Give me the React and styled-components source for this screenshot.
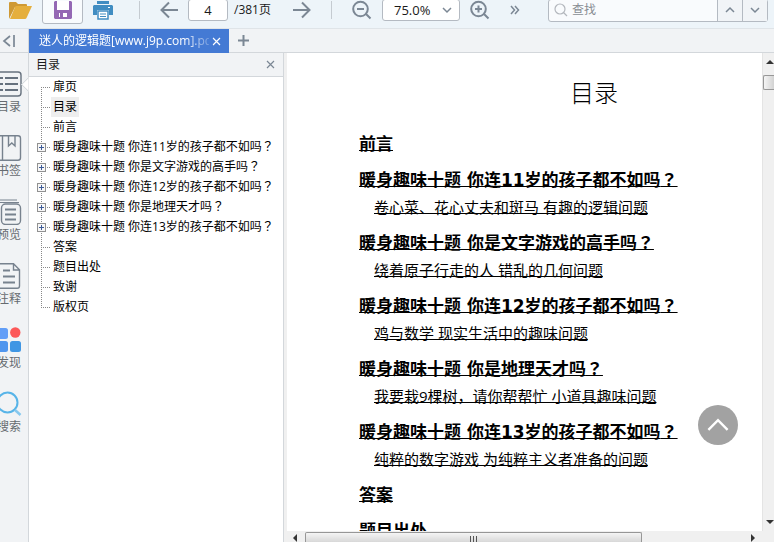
import React, { useState } from 'react'
import styled, { createGlobalStyle, css, ThemeProvider } from 'styled-components'

const theme = {
  color: {
    text: '#1a1a1a',
    muted: '#666b70',
    icon: '#7b8794',
    toolbar: '#edf4f9',
    panel: '#f1f3f5',
    border: '#d3d7db',
    control: '#b4bac2',
    tab: '#447ad4',
  },
  font: {
    base: '"Open Sans", "Noto Sans CJK SC", sans-serif',
    heading: '"DejaVu Sans", "Noto Sans CJK SC", sans-serif',
    mark: '"Noto Sans CJK TC", sans-serif',
  },
}

const outline = [
  { title: '扉页' },
  { title: '目录' },
  { title: '前言' },
  { title: '暖身趣味十题 你连11岁的孩子都不如吗？', nested: true },
  { title: '暖身趣味十题 你是文字游戏的高手吗？', nested: true },
  { title: '暖身趣味十题 你连12岁的孩子都不如吗？', nested: true },
  { title: '暖身趣味十题 你是地理天才吗？', nested: true },
  { title: '暖身趣味十题 你连13岁的孩子都不如吗？', nested: true },
  { title: '答案' },
  { title: '题目出处' },
  { title: '致谢' },
  { title: '版权页' },
]

const chapters = [
  { title: '前言' },
  { title: '暖身趣味十题 你连11岁的孩子都不如吗？', sub: '卷心菜、花心丈夫和斑马 有趣的逻辑问题' },
  { title: '暖身趣味十题 你是文字游戏的高手吗？', sub: '绕着原子行走的人 错乱的几何问题' },
  { title: '暖身趣味十题 你连12岁的孩子都不如吗？', sub: '鸡与数学 现实生活中的趣味问题' },
  { title: '暖身趣味十题 你是地理天才吗？', sub: '我要栽9棵树，请你帮帮忙 小道具趣味问题' },
  { title: '暖身趣味十题 你连13岁的孩子都不如吗？', sub: '纯粹的数字游戏 为纯粹主义者准备的问题' },
  { title: '答案' },
  { title: '题目出处' },
]

const Arrow = ({ flip }) => (
  <svg width="18" height="18" viewBox="0 0 18 18" fill="none" stroke="currentColor" strokeWidth="2">
    <path d={flip ? 'M0 9h16M9 1.500l7.500 7.500-7.500 7.500' : 'M18 9H2M9 1.500L1.500 9 9 16.500'} />
  </svg>
)

const Lens = ({ plus }) => (
  <svg width="20" height="20" viewBox="0 0 20 20" fill="none" stroke="currentColor" strokeWidth="2">
    <circle cx="8.500" cy="9" r="7.300" />
    <path d="M5 9h7M14 14l4.500 4.500" />
    {plus && <path d="M8.500 5.500v7" />}
  </svg>
)

const Chevron = ({ up, size = 10, width = 1.5 }) => (
  <svg width={size} height={size} viewBox="0 0 10 10" fill="none" stroke="currentColor" strokeWidth={width}>
    <path d={up ? 'M1 7l4-4 4 4' : 'M1 3l4 4 4-4'} />
  </svg>
)

const Cross = ({ size = 9 }) => (
  <svg width={size} height={size} viewBox="0 0 9 9" stroke="currentColor" strokeWidth="1.200">
    <path d="M1 1l7 7M8 1L1 8" />
  </svg>
)

const Triangle = ({ d }) => (
  <svg width="8" height="8" viewBox="0 0 8 8" fill="#333">
    <path d={d} />
  </svg>
)

const FolderIcon = () => (
  <svg width="23" height="20" viewBox="0 0 23 20">
    <path d="M0 19V3q0-1 1-1h6l2 2h8q1 0 1 1v2H6z" fill="#cf9a35" />
    <path d="M1 19L6 7q.5-1 1.500-1H23l-5.500 12q-.5 1-1.500 1z" fill="#e5af3d" />
  </svg>
)

const SaveIcon = () => (
  <svg width="18" height="18" viewBox="0 0 18 18">
    <path d="M1 0h16l1 1v16l-1 1H1l-1-1V1z" fill="#9468b4" />
    <path d="M3 0h12v9H3zM5 12h8v4H5z" fill="#fff" />
    <path d="M6 12h3v4H6z" fill="#9468b4" />
  </svg>
)

const PrintIcon = () => (
  <svg width="20" height="19" viewBox="0 0 20 19">
    <path d="M4 0h12v3H4zM1 4h18l1 1v9h-4V9H4v5H0V5z" fill="#418dc2" />
    <path d="M5 10h10v8H5z" fill="#fff" stroke="#418dc2" strokeWidth="1.500" />
    <path d="M7 13h6M7 15.500h6" stroke="#418dc2" strokeWidth="1.200" />
    <path d="M15 6h2v1h-2z" fill="#fff" />
  </svg>
)

const Line26 = ({ children }) => (
  <svg width="26" height="26" viewBox="0 0 26 26" fill="none" stroke="#77828e" strokeWidth="1.400">
    {children}
  </svg>
)

// the full-width question mark sits in the middle of its square
const Title = ({ text }) => (
  text.endsWith('？') ? <>{text.slice(0, -1)}<Mark>？</Mark></> : text
)

const tools = [
  {
    label: '目录',
    icon: (
      <Line26>
        <rect x="-2" y="1" width="27" height="24" rx="3" stroke="#66717e" />
        <path d="M3 7h4M9 7h13M3 13h4M9 13h13M3 19h4M9 19h13" stroke="#66717e" strokeWidth="2" />
      </Line26>
    ),
  },
  {
    label: '书签',
    icon: (
      <Line26>
        <rect x="-2" y="0.700" width="26.500" height="24.500" rx="2.500" />
        <path d="M6.500 1v24M12.500 1v10l3.300-3 3.200 3V1" />
      </Line26>
    ),
  },
  {
    label: '预览',
    icon: (
      <Line26>
        <path d="M2 1h19M3 3.500h20" strokeWidth="1" />
        <rect x="5.500" y="5" width="19" height="20.500" rx="4" />
        <path d="M9 10.500h11M9 15.500h11M9 20.500h11" strokeWidth="2" />
      </Line26>
    ),
  },
  {
    label: '注释',
    icon: (
      <Line26>
        <path d="M0 .7h17.500l6 6V23q0 2.300-2.300 2.300H0M17.500 1v6h6" />
        <path d="M7 7.500h7M7 13.500h12M7 19.500h12" strokeWidth="2" />
      </Line26>
    ),
  },
  {
    label: '发现',
    icon: (
      <svg width="26" height="26" viewBox="0 0 26 26">
        <rect x="1" y="1" width="11" height="11" rx="2.500" fill="#629ef7" />
        <circle cx="19.300" cy="5.500" r="5.200" fill="#fc5858" />
        <rect x="1" y="14" width="11" height="11" rx="2.500" fill="#5096ee" />
        <rect x="14" y="14" width="11" height="11" rx="2.500" fill="#3f96e4" />
      </svg>
    ),
  },
  {
    label: '搜索',
    icon: (
      <svg width="26" height="26" viewBox="0 0 26 26" fill="none" stroke="#57b4e8" strokeWidth="2">
        <circle cx="11.500" cy="11.500" r="10" />
        <path d="M19 19l5.500 5" stroke="#86c8ee" strokeWidth="2.500" />
      </svg>
    ),
  },
]

const App = () => {
  const [active, setActive] = useState('目录')
  const [selected, setSelected] = useState('目录')
  const [page, setPage] = useState('4')
  const [zoom, setZoom] = useState('75.0%')

  return (
    <ThemeProvider theme={theme}>
      <GlobalStyle />
      <Window>
        <Toolbar>
          <Toolbar.Group $end="6px">
            <IconButton aria-label="打开"><FolderIcon /></IconButton>
            <IconButton aria-label="保存" $framed><SaveIcon /></IconButton>
            <IconButton aria-label="打印"><PrintIcon /></IconButton>
          </Toolbar.Group>
          <Divider />
          <Toolbar.Group $end="2px">
            <IconButton aria-label="上一页"><Arrow /></IconButton>
            <Pager>
              <Pager.Input aria-label="页码" value={page} onChange={e => setPage(e.target.value)} />
              /381页
            </Pager>
          </Toolbar.Group>
          <IconButton aria-label="下一页"><Arrow flip /></IconButton>
          <Divider />
          <Toolbar.Group>
            <IconButton aria-label="缩小"><Lens /></IconButton>
            <Zoom>
              <Zoom.Select aria-label="缩放" value={zoom} onChange={e => setZoom(e.target.value)}>
                <option>50.0%</option>
                <option>75.0%</option>
                <option>100.0%</option>
              </Zoom.Select>
              <Chevron />
            </Zoom>
            <IconButton aria-label="放大"><Lens plus /></IconButton>
          </Toolbar.Group>
          <IconButton aria-label="更多">
            <svg width="10" height="10" viewBox="0 0 10 10" fill="none" stroke="currentColor" strokeWidth="1.500">
              <path d="M1 1l3.500 4L1 9M5 1l3.500 4L5 9" />
            </svg>
          </IconButton>
          <Search>
            <svg width="14" height="14" viewBox="0 0 14 14" fill="none" stroke="#b3b7bd" strokeWidth="1.200">
              <circle cx="6" cy="6" r="5" />
              <path d="M9.500 9.500L13 13" />
            </svg>
            <Search.Input aria-label="查找" placeholder="查找" />
            <Search.Button aria-label="查找上一个"><Chevron up /></Search.Button>
            <Search.Button aria-label="查找下一个"><Chevron /></Search.Button>
          </Search>
        </Toolbar>

        <TabBar>
          <TabBar.Collapse aria-label="收起">
            <svg width="13" height="12" viewBox="0 0 13 12" fill="none" stroke="currentColor" strokeWidth="1.700">
              <path d="M8 1L2 6l6 5M12 0v12" />
            </svg>
          </TabBar.Collapse>
          <Tab>
            <Tab.Name>迷人的逻辑题[www.j9p.com].pdf</Tab.Name>
            <IconButton aria-label="关闭标签" $light><Cross /></IconButton>
          </Tab>
          <TabBar.Add aria-label="新标签">
            <svg width="11" height="11" viewBox="0 0 11 11" stroke="currentColor" strokeWidth="2">
              <path d="M5.500 0v11M0 5.500h11" />
            </svg>
          </TabBar.Add>
        </TabBar>

        <Body>
          <Sidebar>
            {tools.map(({ label, icon }) => (
              <Sidebar.Item key={label} $active={active === label} onClick={() => setActive(label)}>
                {icon}
                <span>{label}</span>
              </Sidebar.Item>
            ))}
          </Sidebar>

          <Panel>
            <Panel.Header>
              目录
              <IconButton aria-label="关闭目录"><Cross /></IconButton>
            </Panel.Header>
            <Tree>
              {outline.map(({ title, nested }, i) => (
                <Tree.Row key={title}>
                  <Branch $first={i === 0} $last={i === outline.length - 1}>
                    {nested && <Branch.Toggle aria-label="展开" />}
                  </Branch>
                  <Tree.Label $selected={selected === title} onClick={() => setSelected(title)}>
                    <Title text={title} />
                  </Tree.Label>
                </Tree.Row>
              ))}
            </Tree>
          </Panel>

          <Viewer>
            <Viewport>
              <Sheet>
                <Sheet.Title>目录</Sheet.Title>
                {chapters.map(({ title, sub }) => (
                  <Chapter key={title}>
                    <Chapter.Title><a href="#chapter"><Title text={title} /></a></Chapter.Title>
                    {sub && <Chapter.Sub><a href="#section">{sub}</a></Chapter.Sub>}
                  </Chapter>
                ))}
              </Sheet>
              <ToTop aria-label="回到顶部"><Chevron up size={24} width={1} /></ToTop>
            </Viewport>
            <ScrollY>
              <ScrollY.Start>
                <Triangle d="M4 2l4 4H0z" />
                <ScrollY.Thumb />
              </ScrollY.Start>
              <Triangle d="M0 2h8L4 6z" />
            </ScrollY>
            <ScrollX>
              <Triangle d="M6 0v8L2 4z" />
              <ScrollX.Track>
                <ScrollX.Thumb>
                  <svg width="8" height="6" viewBox="0 0 8 6" stroke="#555">
                    <path d="M.5 0v6M3.500 0v6M6.500 0v6" />
                  </svg>
                </ScrollX.Thumb>
              </ScrollX.Track>
              <Triangle d="M2 0l4 4-4 4z" />
            </ScrollX>
            <Corner />
          </Viewer>
        </Body>
      </Window>
    </ThemeProvider>
  )
}

const GlobalStyle = createGlobalStyle`
  * {
    box-sizing: border-box;
  }
  body {
    margin: 0;
    overflow: hidden;
    color: ${props => props.theme.color.text};
    font: 12px/18px ${props => props.theme.font.base};
  }
  button, input, select {
    margin: 0;
    padding: 0;
    border: 0;
    background: none;
    color: inherit;
    font: inherit;
  }
  svg {
    display: block;
    flex: none;
  }
`

const Window = styled.div`
  display: flex;
  flex-direction: column;
  height: 100vh;
  background: #fff;
`

const Mark = styled.span`
  font-family: ${props => props.theme.font.mark};
  line-height: 1;
`

const Toolbar = styled.header`
  display: flex;
  flex: none;
  align-items: center;
  gap: 20px;
  height: 29px;
  padding: 0 6px 8px 9px;
  border-bottom: 1px solid #dfe4e8;
  background: ${props => props.theme.color.toolbar};
`

Toolbar.Group = styled.div`
  display: flex;
  align-items: center;
  gap: 10px;
  padding-right: ${props => props.$end || 0};
`

const IconButton = styled.button`
  display: flex;
  flex: none;
  align-items: center;
  justify-content: center;
  color: ${props => (props.$light ? '#fff' : props.theme.color.icon)};
  ${props => props.$framed && css`
    width: 41px;
    height: 28px;
    border: 1px solid ${props.theme.color.control};
    border-radius: 3px;
    background: #f8fbfd;
  `}
`

const Divider = styled.div`
  flex: none;
  width: 1px;
  height: 18px;
  background: #c5cbd1;
`

const Pager = styled.label`
  display: flex;
  align-items: center;
  gap: 6px;
  white-space: nowrap;
`

Pager.Input = styled.input`
  width: 40px;
  height: 22px;
  border: 1px solid ${props => props.theme.color.control};
  border-radius: 3px;
  background: #fff;
  font-size: 13px;
  text-align: center;
`

const Zoom = styled.div`
  display: flex;
  align-items: center;
  width: 78px;
  height: 22px;
  padding-right: 7px;
  border: 1px solid ${props => props.theme.color.control};
  border-radius: 3px;
  background: #fff;
  color: ${props => props.theme.color.icon};
`

Zoom.Select = styled.select`
  flex: 1;
  min-width: 0;
  padding-left: 11px;
  appearance: none;
  color: ${props => props.theme.color.text};
  font-size: 13px;
`

const Search = styled.div`
  display: flex;
  flex: 1;
  align-items: center;
  height: 23px;
  min-width: 120px;
  margin-left: 8px;
  padding-left: 5px;
  border: 1px solid ${props => props.theme.color.control};
  border-radius: 3px;
  background: #f9fbfd;
`

Search.Input = styled.input`
  flex: 1;
  min-width: 0;
  padding-left: 4px;
  &::placeholder {
    color: #888d93;
    opacity: 1;
  }
`

Search.Button = styled.button`
  display: flex;
  align-items: center;
  justify-content: center;
  width: 25px;
  height: 100%;
  border-left: 1px solid ${props => props.theme.color.control};
  background: #f1f4f7;
  color: ${props => props.theme.color.icon};
`

const TabBar = styled.div`
  display: flex;
  flex: none;
  height: 24px;
  border-bottom: 1px solid ${props => props.theme.color.border};
  background: ${props => props.theme.color.panel};
`

TabBar.Collapse = styled.button`
  display: flex;
  align-items: center;
  width: 29px;
  padding-left: 2px;
  border-right: 1px solid ${props => props.theme.color.border};
  color: ${props => props.theme.color.icon};
`

TabBar.Add = styled.button`
  display: flex;
  align-items: center;
  padding: 0 9px;
  color: ${props => props.theme.color.icon};
`

const Tab = styled.div`
  display: flex;
  align-items: center;
  gap: 3px;
  width: 200px;
  height: 24px;
  padding: 0 8px 0 10px;
  background: ${props => props.theme.color.tab};
  color: #fff;
`

Tab.Name = styled.span`
  flex: 1;
  overflow: hidden;
  white-space: nowrap;
  mask-image: linear-gradient(90deg, #000 85%, transparent 105%);
`

const Body = styled.main`
  display: flex;
  flex: 1;
  min-height: 0;
`

const Sidebar = styled.nav`
  display: flex;
  flex: none;
  flex-direction: column;
  align-items: flex-end;
  gap: 18px;
  width: 29px;
  padding: 18px 6px 0 0;
  border-right: 1px solid ${props => props.theme.color.border};
  background: ${props => props.theme.color.panel};
`

Sidebar.Item = styled.button`
  position: relative;
  width: 26px;
  color: ${props => props.theme.color.muted};
  line-height: 20px;
  white-space: nowrap;
  span {
    display: block;
  }
  ${props => props.$active && css`
    &:after {
      content: '';
      position: absolute;
      top: 8px;
      right: -12px;
      width: 10px;
      height: 10px;
      border: solid ${props.theme.color.border};
      border-width: 0 0 1px 1px;
      background: #fff;
      transform: rotate(45deg);
      clip-path: polygon(0 0, 100% 100%, 0 100%);
    }
  `}
`

const Panel = styled.section`
  display: flex;
  flex: none;
  flex-direction: column;
  width: 255px;
  border-right: 1px solid ${props => props.theme.color.border};
`

Panel.Header = styled.div`
  display: flex;
  align-items: center;
  justify-content: space-between;
  height: 24px;
  padding: 0 8px 0 7px;
  border-bottom: 1px solid ${props => props.theme.color.border};
  background: ${props => props.theme.color.panel};
`

const Tree = styled.ul`
  margin: 0;
  padding: 0 0 0 8px;
  color: #000;
  list-style: none;
`

Tree.Row = styled.li`
  display: flex;
  height: 20px;
`

Tree.Label = styled.button`
  padding: 0 2px;
  background: ${props => (props.$selected ? '#eee' : 'none')};
  white-space: nowrap;
`

// dotted connector lines: one down the column, one out to the label
const Branch = styled.span`
  display: flex;
  flex: none;
  align-items: center;
  width: 14px;
  background:
    repeating-linear-gradient(#888 0 1px, transparent 1px 2px)
      4px ${props => (props.$first ? '10px' : '0')} / 1px ${props => (props.$last ? '10px' : '100%')} no-repeat,
    repeating-linear-gradient(90deg, #888 0 1px, transparent 1px 2px)
      4px 10px / 9px 1px no-repeat;
`

Branch.Toggle = styled.button`
  width: 9px;
  height: 9px;
  margin-top: 1px;
  border: 1px solid #919191;
  background:
    linear-gradient(#3c5a96, #3c5a96) center / 5px 1px no-repeat,
    linear-gradient(#3c5a96, #3c5a96) center / 1px 5px no-repeat,
    #f7f7f7;
`

const Viewer = styled.section`
  display: grid;
  flex: 1;
  grid-template-rows: 1fr 11px;
  grid-template-columns: 1fr 12px;
  min-width: 0;
  padding-left: 3px;
  background: #f0f0f0;
`

const Viewport = styled.div`
  position: relative;
  min-width: 0;
  min-height: 0;
  overflow: hidden;
  background: #fff;
`

const Sheet = styled.article`
  width: 614px;
  padding: 22px 0 0 72px;
  color: #000;
  a {
    color: inherit;
    text-decoration-thickness: 1px;
    text-decoration-skip-ink: none;
    text-underline-offset: 0;
  }
`

Sheet.Title = styled.h1`
  margin: 0 0 20px -72px;
  font-size: 24px;
  font-weight: 300;
  line-height: 36px;
  text-align: center;
`

const Chapter = styled.section`
  margin-bottom: 9px;
  line-height: 27px;
  white-space: nowrap;
`

Chapter.Title = styled.h2`
  margin: 0;
  font-family: ${props => props.theme.font.heading};
  font-size: 17px;
  font-weight: 700;
  line-height: 27px;
`

Chapter.Sub = styled.p`
  margin: 0;
  padding-left: 15px;
  font-size: 15px;
`

const ToTop = styled.button`
  position: absolute;
  right: 24px;
  bottom: 86px;
  display: flex;
  align-items: center;
  justify-content: center;
  width: 40px;
  height: 40px;
  border-radius: 50%;
  background: #a2a2a2;
  color: #fff;
`

const ScrollY = styled.div`
  display: flex;
  flex-direction: column;
  align-items: flex-end;
  justify-content: space-between;
  padding: 5px 0;
  border-left: 1px solid #e4e4e4;
`

ScrollY.Start = styled.div`
  display: flex;
  flex-direction: column;
  align-items: flex-end;
  gap: 9px;
  width: 100%;
`

ScrollY.Thumb = styled.div`
  width: 100%;
  height: 15px;
  border: 1px solid #979797;
  border-right: 0;
  border-radius: 2px 0 0 2px;
  background: linear-gradient(90deg, #f5f5f5, #d2d2d2);
`

const ScrollX = styled.div`
  display: flex;
  align-items: flex-end;
  gap: 6px;
  min-width: 0;
  padding: 0 5px 0 4px;
`

ScrollX.Track = styled.div`
  flex: 1;
  height: 10px;
`

ScrollX.Thumb = styled.div`
  display: flex;
  align-items: flex-end;
  justify-content: center;
  width: 77%;
  height: 10px;
  border: 1px solid #979797;
  border-bottom: 0;
  border-radius: 2px 2px 0 0;
  background: linear-gradient(#f5f5f5, #d8d8d8);
`

const Corner = styled.div`
  background: #f0f0f0;
`

export default App
